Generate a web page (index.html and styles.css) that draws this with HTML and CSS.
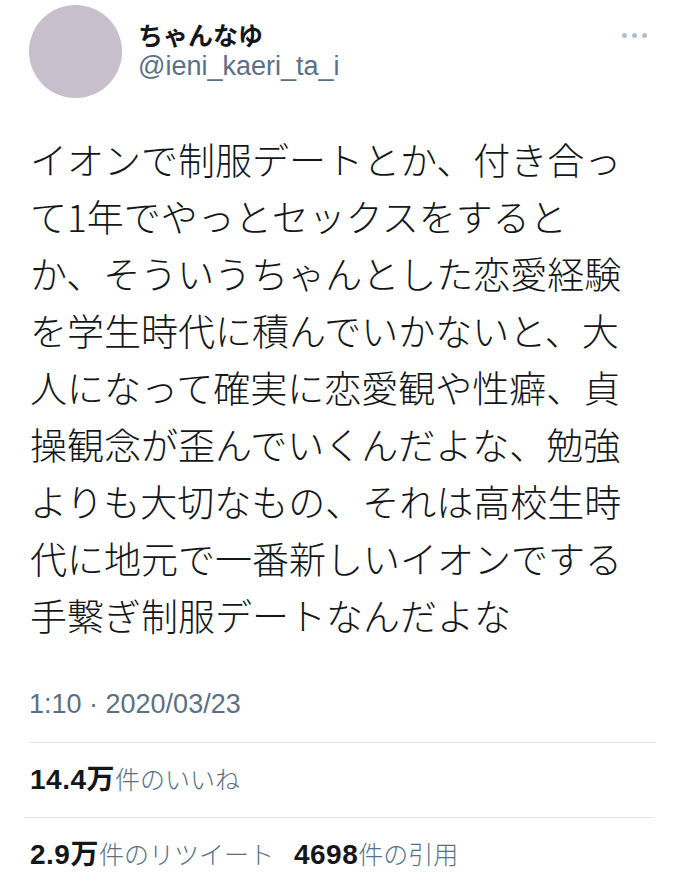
FILE: index.html
```html
<!DOCTYPE html>
<html lang="ja">
<head>
    <meta charset="UTF-8">
    <meta name="viewport" content="width=device-width, initial-scale=1.0">
    <title>ちゃんなゆ (@ieni_kaeri_ta_i)</title>
    <link rel="stylesheet" href="styles.css">
</head>
<body>
    <div class="tweet">
        <div class="tweet-header">
            <div class="avatar"></div>
            <div class="user">
                <div class="user-name">ちゃんなゆ</div>
                <div class="user-handle">@ieni_kaeri_ta_i</div>
            </div>
            <div class="more">
                <span></span><span></span><span></span>
            </div>
        </div>

        <p class="tweet-text">
            イオンで制服デートとか、付き合っ<br>
            て1年でやっとセックスをすると<br>
            か、そういうちゃんとした恋愛経験<br>
            を学生時代に積んでいかないと、大<br>
            人になって確実に恋愛観や性癖、貞<br>
            操観念が歪んでいくんだよな、勉強<br>
            よりも大切なもの、それは高校生時<br>
            代に地元で一番新しいイオンでする<br>
            手繋ぎ制服デートなんだよな
        </p>

        <div class="tweet-time">1:10 · 2020/03/23</div>

        <div class="stats stats-likes">
            <span class="stat"><b>14.4万</b>件のいいね</span>
        </div>
        <div class="stats">
            <span class="stat"><b>2.9万</b>件のリツイート</span>
            <span class="stat"><b>4698</b>件の引用</span>
        </div>
    </div>
</body>
</html>
```

FILE: styles.css
```css
body {
    margin: 0;
    background: #fff;
    color: #14171a;
    font-family: "Liberation Sans", "Noto Sans CJK JP", sans-serif;
}

.tweet {
    padding: 5px 0 0 0;
}

.tweet-header {
    display: flex;
    align-items: flex-start;
    padding-left: 29px;
}

.avatar {
    width: 93px;
    height: 93px;
    border-radius: 50%;
    background: #c7bfcc;
    flex-shrink: 0;
}

.user {
    margin-left: 16px;
    padding-top: 16px;
}

.user-name {
    font-size: 25px;
    font-weight: 700;
    line-height: 30px;
    color: #14171a;
}

.user-handle {
    font-size: 27px;
    line-height: 30px;
    color: #5b7083;
}

.more {
    display: flex;
    gap: 5px;
    margin-left: auto;
    margin-right: 33px;
    margin-top: 28px;
}

.more span {
    width: 5px;
    height: 5px;
    border-radius: 50%;
    background: #b3c0ca;
}

.tweet-text {
    margin: 33px 0 0 0;
    padding-left: 30px;
    font-family: "Noto Sans CJK JP", "Liberation Sans", sans-serif;
    font-size: 37px;
    font-weight: 300;
    line-height: 57px;
    color: #14171a;
}

.tweet-time {
    margin: 45px 24px 0 29px;
    padding-bottom: 23px;
    border-bottom: 1px solid #e1e8ed;
    font-size: 27px;
    line-height: 30px;
    color: #5b7083;
}

.stats {
    display: flex;
    gap: 20px;
    margin: 0 26px 0 24px;
    padding: 22px 0 22px 6px;
    font-size: 25px;
    line-height: 30px;
}

.stats-likes {
    border-bottom: 1px solid #e1e8ed;
}

.stat {
    color: #5b7083;
    font-weight: 300;
}

.stat b {
    color: #14171a;
    font-size: 28px;
    font-weight: 700;
    letter-spacing: 0.5px;
}
```
